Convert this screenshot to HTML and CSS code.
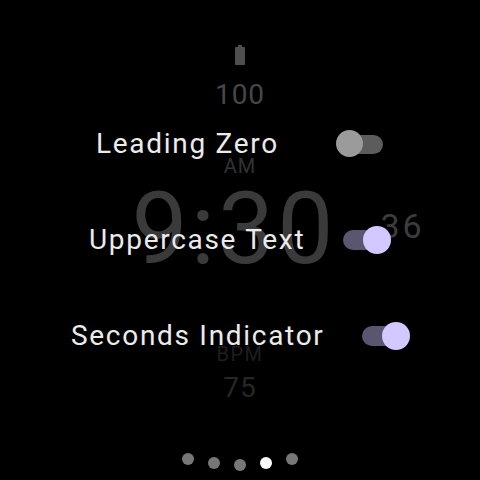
FILE: index.html
```html
<!DOCTYPE html>
<html lang="en">
<head>
    <meta charset="UTF-8">
    <meta name="viewport" content="width=device-width, initial-scale=1.0">
    <title>Watch Face - Settings</title>
    <link rel="stylesheet" href="styles.css">
</head>
<body>
    <div class="screen">
        <!-- Watch face, dimmed behind the settings -->
        <div class="face">
            <div class="battery"><span class="battery-nub"></span><span class="battery-body"></span></div>
            <div class="battery-level">100</div>
            <div class="ampm">AM</div>
            <div class="time-row">
                <div class="time">9:30</div>
                <div class="seconds">36</div>
            </div>
            <div class="bpm-label">BPM</div>
            <div class="bpm">75</div>
        </div>

        <!-- Settings list -->
        <div class="settings">
            <div class="setting-row row-1">
                <span class="setting-label">Leading Zero</span>
                <span class="toggle"><span class="track"></span><span class="thumb"></span></span>
            </div>
            <div class="setting-row row-2">
                <span class="setting-label">Uppercase Text</span>
                <span class="toggle on"><span class="track"></span><span class="thumb"></span></span>
            </div>
            <div class="setting-row row-3">
                <span class="setting-label">Seconds Indicator</span>
                <span class="toggle on"><span class="track"></span><span class="thumb"></span></span>
            </div>

            <div class="page-dots">
                <span class="dot dot-1"></span>
                <span class="dot dot-2"></span>
                <span class="dot dot-3"></span>
                <span class="dot dot-4 active"></span>
                <span class="dot dot-5"></span>
            </div>
        </div>
    </div>
</body>
</html>
```

FILE: styles.css
```css
body {
    margin: 0;
    padding: 0;
    background-color: #000;
    font-family: Roboto, "Liberation Sans", sans-serif;
}
.screen {
    position: relative;
    width: 480px;
    height: 480px;
    overflow: hidden;
    background: #000;
}

/* watch face */
.face {
    display: flex;
    flex-direction: column;
    align-items: center;
    padding-top: 45px;
    line-height: 1;
}
.battery {
    display: flex;
    flex-direction: column;
    align-items: center;
    width: 10px;
    height: 20px;
}
.battery-nub {
    width: 4px;
    height: 2px;
    background: #4f4f4f;
}
.battery-body {
    width: 10px;
    height: 18px;
    border-radius: 1px;
    background: #4f4f4f;
}
.battery-level {
    margin-top: 16px;
    font-size: 28px;
    letter-spacing: 1px;
    color: #474747;
}
.ampm {
    margin-top: 47px;
    font-size: 20px;
    letter-spacing: 1px;
    color: #323232;
}
.time-row {
    display: grid;
    grid-template-columns: 1fr auto 1fr;
    width: 100%;
    box-sizing: border-box;
    padding-right: 12px;
    margin-top: 3px;
}
.time {
    grid-column: 2;
    font-size: 100px;
    letter-spacing: 3px;
    color: #3a3a3a;
}
.seconds {
    grid-column: 3;
    justify-self: start;
    margin-left: 44px;
    margin-top: 30px;
    font-size: 34px;
    letter-spacing: 3px;
    color: #3c3c3c;
}
.bpm-label {
    margin-top: 65px;
    font-size: 20px;
    letter-spacing: 1.5px;
    color: #1e1e1e;
}
.bpm {
    margin-top: 10px;
    font-size: 28px;
    letter-spacing: 1px;
    color: #262626;
}

/* settings overlay */
.settings {
    position: absolute;
    top: 0;
    left: 0;
    right: 0;
    bottom: 0;
    display: flex;
    flex-direction: column;
    padding-top: 96px;
}
.setting-row {
    display: flex;
    justify-content: space-between;
    align-items: center;
    height: 96px;
}
.row-1 {
    margin-left: 96px;
    width: 288px;
}
.row-2 {
    margin-left: 89px;
    width: 302px;
}
.row-3 {
    margin-left: 71px;
    width: 339px;
}
.setting-label {
    font-size: 28px;
    line-height: 1;
    letter-spacing: 1.7px;
    color: #ebebeb;
    white-space: nowrap;
}
.toggle {
    position: relative;
    width: 48px;
    height: 28px;
}
.toggle .track {
    position: absolute;
    top: 5px;
    left: 3px;
    width: 44px;
    height: 19px;
    border-radius: 10px;
    background: #5c5c5c;
}
.toggle .thumb {
    position: absolute;
    top: 0;
    left: 0;
    width: 27px;
    height: 27px;
    border-radius: 50%;
    background: #9b9b9b;
}
.toggle.on .track {
    top: 4px;
    left: 0;
    height: 20px;
    background: #5b5670;
}
.toggle.on .thumb {
    left: 20px;
    width: 28px;
    height: 28px;
    background: #d3c8ff;
}

.page-dots {
    display: flex;
    align-items: flex-start;
    justify-content: center;
    gap: 14px;
    margin-top: 69px;
}
.dot {
    width: 12px;
    height: 12px;
    border-radius: 50%;
    background: #777;
}
.dot.active {
    background: #fff;
}
.dot-2, .dot-4 {
    margin-top: 4px;
}
.dot-3 {
    margin-top: 6px;
}
```
